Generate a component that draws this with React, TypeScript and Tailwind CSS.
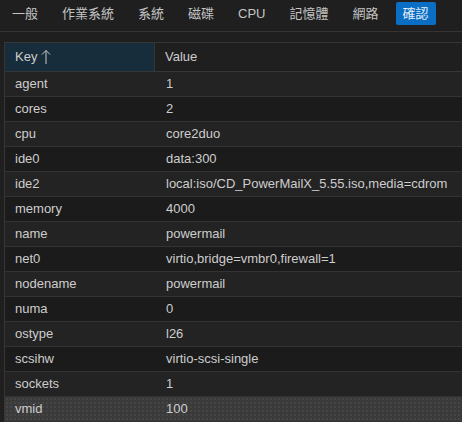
const tabs = ["一般", "作業系統", "系統", "磁碟", "CPU", "記憶體", "網路", "確認"];

const rows: [string, string][] = [
  ["agent", "1"],
  ["cores", "2"],
  ["cpu", "core2duo"],
  ["ide0", "data:300"],
  ["ide2", "local:iso/CD_PowerMailX_5.55.iso,media=cdrom"],
  ["memory", "4000"],
  ["name", "powermail"],
  ["net0", "virtio,bridge=vmbr0,firewall=1"],
  ["nodename", "powermail"],
  ["numa", "0"],
  ["ostype", "l26"],
  ["scsihw", "virtio-scsi-single"],
  ["sockets", "1"],
  ["vmid", "100"],
];

const SortUp = () => (
  <svg width="10" height="16" viewBox="0 0 10 16" className="ml-[4px]">
    <path d="M5 15V1.5M1 5.5L5 1.5L9 5.5" stroke="#c8c8c8" strokeWidth="1" fill="none" />
  </svg>
);

const App = () => {
  const selected = "vmid";

  return (
    <div className="w-[462px] h-[422px] overflow-hidden bg-[#1f1f1f] text-[13px] text-[#cdcdcd] font-['Liberation_Sans','Noto_Sans_CJK_TC',sans-serif]">
      {/* wizard tabs */}
      <div className="h-[32px] flex items-start pl-[7px] gap-[14px] border-b border-[#343434]">
        {tabs.map((tab, i) => (
          <div
            key={tab}
            className={
              i === tabs.length - 1
                ? "mt-[2px] ml-[-2px] h-[23px] px-[7px] flex items-center rounded-[2px] bg-[#0a6fc4] text-[#e6eef8]"
                : "mt-[2px] h-[23px] px-[5px] flex items-center text-[#c4c4c4]"
            }
          >
            {tab}
          </div>
        ))}
      </div>

      {/* confirm grid */}
      <div className="mt-[10px] ml-[4px] border-l border-t border-[#363636]">
        <div className="h-[29px] flex border-b border-[#363636]">
          <div className="w-[150px] flex items-center pl-[10px] bg-[#172d3b] border-r border-[#363636]">
            Key
            <SortUp />
          </div>
          <div className="flex-1 flex items-center pl-[10px]">Value</div>
        </div>
        {rows.map(([key, value], i) => (
          <div
            key={key}
            className={
              key === selected
                ? "h-[25px] flex items-center bg-[#3a3a3a] bg-[radial-gradient(#454545_0.8px,transparent_0.8px)] bg-[size:4px_4px] border-b border-[#333]"
                : i % 2 === 0
                  ? "h-[25px] flex items-center bg-[#232323] border-b border-[#333]"
                  : "h-[25px] flex items-center bg-[#1b1b1b] border-b border-[#333]"
            }
          >
            <div className="w-[151px] pl-[10px]">{key}</div>
            <div className="flex-1 pl-[10px] whitespace-nowrap">{value}</div>
          </div>
        ))}
      </div>
    </div>
  );
};

export default App;
